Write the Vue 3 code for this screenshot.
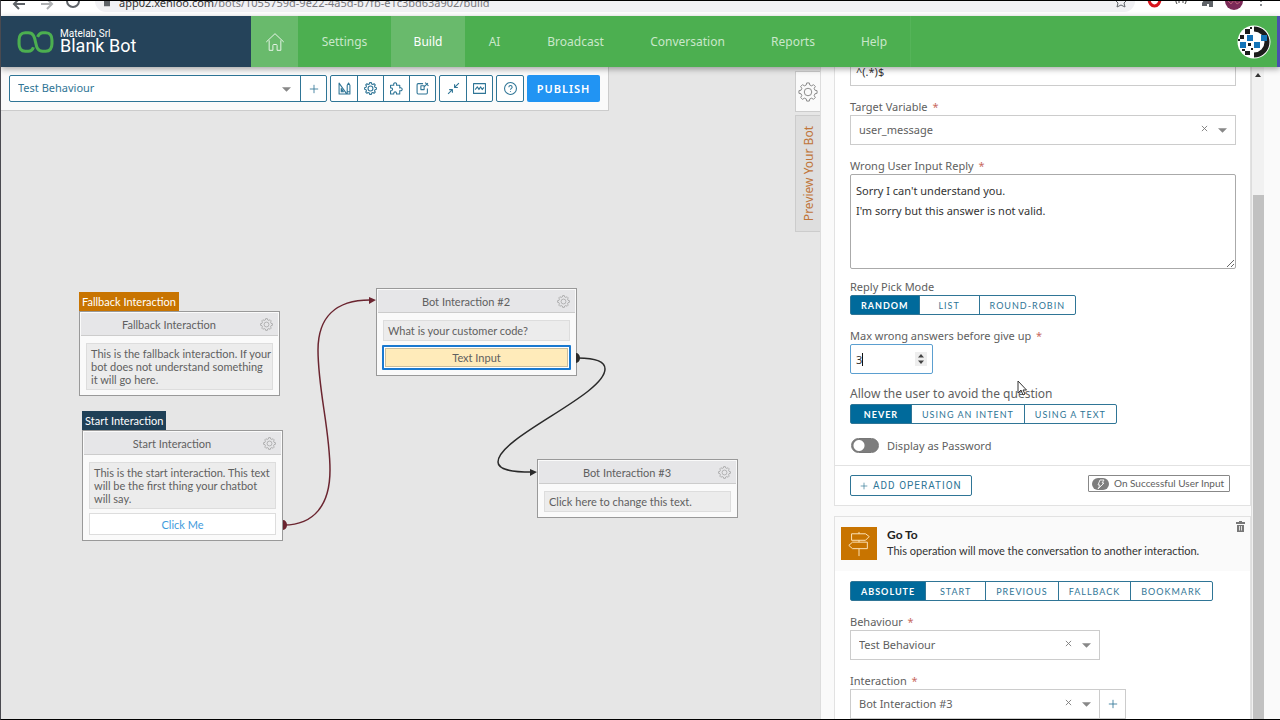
<script setup>
import { ref } from 'vue'

function gearPath(teeth, inner, outer, c) {
  const step = (Math.PI * 2) / teeth
  const at = (r, a) => `${(c + r * Math.sin(a)).toFixed(2)} ${(c - r * Math.cos(a)).toFixed(2)}`
  let d = ''
  for (let i = 0; i < teeth; i++) {
    const a = i * step
    d += `${i ? 'L' : 'M'}${at(inner, a - step * 0.32)}L${at(outer, a - step * 0.18)}L${at(outer, a + step * 0.18)}L${at(inner, a + step * 0.32)}`
  }
  return d + 'Z'
}

const icons = {
  gear: gearPath(8, 8.6, 11, 12) + 'M16.5 12A4.5 4.5 0 1 1 7.5 12A4.5 4.5 0 1 1 16.5 12Z',
  plus: 'M12 2V22M2 12H22',
  design: 'M2 2V22H16ZM6 12V18H10ZM17 6L19.500 2L22 6V22H17ZM17 18H22',
  puzzle: 'M1 6H7C5 0 14 0 12 6H18V11C24 9 24 18 18 16V22H12C13 17 6 17 7 22H1V16C6 17 6 10 1 11Z',
  open: 'M13 3H4Q2 3 2 5V20Q2 22 4 22H19Q21 22 21 20V12M17 1L23 7M22 2L14 10M9 7H15V14H9Z',
  collapse: 'M22 2L14 10M14 4V10H20M2 22L10 14M4 14H10V20',
  chart: 'M1 3H23V21H1ZM4 14L8 9L11 14L14 9L17 14L20 10',
  help: 'M23 12A11 11 0 1 1 1 12A11 11 0 1 1 23 12ZM9 9.5C9 5.5 15 5.5 15 9.5C15 12 12 11.5 12 14.5M12 17V18.5',
  home: 'M1.5 12L12 2L22.500 12M5 10V22H9.500V16Q9.500 15 10.500 15H13.500Q14.500 15 14.500 16V22H19V10'
}

const nav = [
  { label: 'Settings' },
  { label: 'Build', active: true },
  { label: 'AI' },
  { label: 'Broadcast' },
  { label: 'Conversation' },
  { label: 'Reports' },
  { label: 'Help' }
]

const toolGroups = [
  [
    { icon: 'design', label: 'Design' },
    { icon: 'gear', label: 'Behaviour settings' },
    { icon: 'puzzle', label: 'Plugins' },
    { icon: 'open', label: 'Export' }
  ],
  [
    { icon: 'collapse', label: 'Collapse' },
    { icon: 'chart', label: 'Overview' }
  ],
  [{ icon: 'help', label: 'Help' }]
]

const nodes = [
  { x: 78, y: 225, tag: 'Fallback Interaction', tone: 'orange', title: 'Fallback Interaction', text: 'This is the fallback interaction. If your\nbot does not understand something\nit will go here.' },
  { x: 81, y: 344, tag: 'Start Interaction', tone: 'navy', title: 'Start Interaction', text: 'This is the start interaction. This text\nwill be the first thing your chatbot\nwill say.', action: 'Click Me' },
  { x: 375, y: 221, title: 'Bot Interaction #2', text: 'What is your customer code?', input: 'Text Input' },
  { x: 536, y: 392, title: 'Bot Interaction #3', text: 'Click here to change this text.' }
]

const replies = ref("Sorry I can't understand you.\nI'm sorry but this answer is not valid.")
const pickMode = ref('Random')
const avoidMode = ref('Never')
const target = ref('Absolute')
</script>

<template>
  <div class="page">
    <div class="chrome">
      <svg class="chrome-nav" viewBox="0 0 90 12"><path d="M13 3H24M18 8L13 3L18 -2" /><path d="M40 3H51M46 8L51 3L46 -2" opacity="0.5" /><path d="M78 0A6 6 0 0 1 66 0" /></svg>
      <div class="url">
        <svg class="lock" viewBox="0 0 8 8"><rect width="8" height="7" /></svg>
        <span class="host">app02.xenioo.com</span><span>/bots/1055759d-9e22-4a5d-b7fb-e1c3bd63a902/build</span>
        <svg class="star" viewBox="0 0 12 12"><path d="M1 0L3 2L2 6L6 4L10 6L9 2L11 0" /></svg>
      </div>
      <svg class="chrome-ext" viewBox="0 0 145 12">
        <path d="M14 -2A5.500 7 0 0 0 25 -2" fill="none" stroke="#d8141c" stroke-width="3" />
        <path d="M41 -1V1L42 3M51 -1V1L50 3M44 -1V2M48 -1V2" fill="none" stroke="#444" />
        <path d="M69 -1H78V6H74V3H72V5H67V2Z" fill="#5f6368" />
        <circle cx="99" cy="0" r="9" fill="#7b2a58" /><path d="M93 0L96 3L99 -1L102 3L105 1" fill="none" stroke="#b86078" stroke-width="1" />
        <circle cx="126" cy="0" r="1" fill="#5f6368" /><circle cx="126" cy="4" r="1" fill="#5f6368" />
      </svg>
    </div>

    <header class="topbar">
      <div class="brand">
        <svg class="logo" viewBox="0 0 36 22"><path d="M16 16C15 19 13 20 11 20H8C4 20 2 17 2 13V9C2 5 4 2 8 2H11C16 2 17 6 18 11C19 16 20 20 25 20H28C32 20 34 17 34 13V9C34 5 32 2 28 2H25C22 2 21 4 20 6" /></svg>
        <div>
          <div class="company">Matelab Srl</div>
          <div class="bot">Blank Bot</div>
        </div>
      </div>
      <nav class="menu">
        <a class="home" href="#" aria-label="Home"><svg class="ico home-ico" viewBox="0 0 24 24"><path :d="icons.home" /></svg></a>
        <a v-for="n in nav" :key="n.label" href="#" :class="{ active: n.active }">{{ n.label }}</a>
      </nav>
      <svg class="avatar" viewBox="0 0 34 34">
        <circle cx="17" cy="17" r="16.500" fill="#fff" />
        <path d="M17 4A13 13 0 0 1 17 30" fill="none" stroke="#1c1c1c" stroke-width="5" />
        <path d="M8 4h5v5H8zM3 10h4v4H3zM8 26h5v4H8zM11 18h3v3h-3zM13 2h2v2h-2zM5 24h3v2H5zM1 14h2v2H1zM14 23h2v2h-2z" fill="#1c1c1c" />
        <path d="M23 10h7v6h-7zM17 17h6v6h-6z" fill="#fff" />
        <path d="M10 10h6v6h-6zM3 17h6v6H3zM17 17h6v6h-6zM24 10h6v6h-6z" fill="#1474b8" />
      </svg>
      <div class="edge"></div>
    </header>

    <div class="workspace">
      <main class="canvas">
        <svg class="wires" width="800" height="653" viewBox="0 0 800 653">
          <g transform="translate(-1 -67)">
            <path d="M284 525C314 525 330 505 330 470C330 430 318 390 318 350C318 318 335 300 370 300" stroke="#6b2530" />
            <path d="M283 520A4 5 0 0 1 283 530ZM369 297L376 300L369 304Z" fill="#6b2530" />
            <path d="M578 358C595 358 605 361 605 369C605 395 498 437 498 462C498 470 512 472 532 472" stroke="#2a2a2a" />
            <path d="M576 353A4 5 0 0 1 576 363ZM530 469L537 472L530 476Z" fill="#2a2a2a" />
          </g>
        </svg>

        <section v-for="n in nodes" :key="n.title" class="node" :style="{ left: n.x + 'px', top: n.y + 'px' }">
          <div v-if="n.tag" class="tag" :class="n.tone">{{ n.tag }}</div>
          <div class="box">
            <div class="box-head">
              <span>{{ n.title }}</span>
              <button class="plain" :aria-label="n.title + ' settings'"><svg class="ico gear-s" viewBox="0 0 24 24"><path :d="icons.gear" /></svg></button>
            </div>
            <div class="box-body">
              <p class="msg">{{ n.text }}</p>
              <button v-if="n.action" class="action">{{ n.action }}</button>
              <div v-if="n.input" class="selected"><button class="text-input">{{ n.input }}</button></div>
            </div>
          </div>
        </section>

        <div class="toolbar">
          <div class="behaviour">
            <div class="pick">
              <select aria-label="Current behaviour"><option>Test Behaviour</option></select>
              <svg class="caret" viewBox="0 0 10 5"><path d="M0 0H10L5 5Z" /></svg>
            </div>
            <button aria-label="Add behaviour"><svg class="ico plus-s" viewBox="0 0 24 24"><path :d="icons.plus" /></svg></button>
          </div>
          <div v-for="(g, i) in toolGroups" :key="i" class="tools">
            <button v-for="t in g" :key="t.label" :aria-label="t.label"><svg class="ico" viewBox="0 0 24 24"><path :d="icons[t.icon]" /></svg></button>
          </div>
          <button class="publish">PUBLISH</button>
        </div>

        <div class="tabs">
          <button class="tab on" aria-label="Settings"><svg class="ico gear-l" viewBox="0 0 24 24"><path :d="icons.gear" /></svg></button>
          <button class="tab preview"><span>Preview Your Bot</span></button>
        </div>
      </main>

      <aside class="panel">
        <div class="scroll">
          <div class="card first">
            <div class="fields">
              <input class="control" aria-label="Pattern" value="^(.*)$" />
              <label class="label" for="variable">Target Variable <i>*</i></label>
              <div class="pick">
                <select id="variable" class="control"><option>user_message</option></select>
                <button class="clear" aria-label="Clear variable"><svg viewBox="0 0 8 8"><path d="M1 1L7 7M7 1L1 7" /></svg></button>
                <svg class="caret" viewBox="0 0 10 5"><path d="M0 0H10L5 5Z" /></svg>
              </div>
              <label class="label" for="reply">Wrong User Input Reply <i>*</i></label>
              <textarea id="reply" v-model="replies"></textarea>
              <div class="label near">Reply Pick Mode</div>
              <div class="group">
                <button v-for="m in ['Random', 'List', 'Round-Robin']" :key="m" :class="{ on: m === pickMode }" @click="pickMode = m">{{ m }}</button>
              </div>
              <label class="label" for="max">Max wrong answers before give up <i>*</i></label>
              <div class="number">
                <input id="max" class="control" type="number" value="3" />
                <span class="cursor"></span>
                <svg class="spin" viewBox="0 0 12 14"><rect width="12" height="14" fill="#eee" /><path d="M3 5.500H9L6 2ZM3 8.500H9L6 12Z" fill="#444" /></svg>
              </div>
              <div class="label large">Allow the user to avoid the question</div>
              <div class="group">
                <button v-for="m in ['Never', 'Using an intent', 'Using a text']" :key="m" :class="{ on: m === avoidMode }" @click="avoidMode = m">{{ m }}</button>
              </div>
              <label class="toggle"><input type="checkbox" />Display as Password</label>
            </div>
            <div class="foot">
              <button class="add"><svg class="ico" viewBox="0 0 24 24"><path :d="icons.plus" /></svg>ADD OPERATION</button>
              <div class="badge">
                <svg viewBox="0 0 17 12"><rect width="17" height="12" rx="6" fill="#7d7d7d" /><path d="M8 2H12L10 5H12L6 11L8 7H6Z" fill="none" stroke="#eee" stroke-width="1" /></svg>
                <span>On Successful User Input</span>
              </div>
            </div>
          </div>

          <div class="card second">
            <div class="op-head">
              <div class="op-icon"><svg viewBox="0 0 24 28"><path d="M12 1V3M4 3H19L23 6L19 10H4ZM12 10V12M5 12H21V19H5L1 15.500ZM12 19V27" /></svg></div>
              <div class="op-text">
                <h3>Go To</h3>
                <p>This operation will move the conversation to another interaction.</p>
              </div>
              <button class="plain trash" aria-label="Delete operation"><svg viewBox="0 0 9 11"><path d="M3 0H6V1H9V3H0V1H3ZM1 4H8V11H1Z" fill="#777" /><path d="M3.500 5V9.500M5.500 5V9.500" stroke="#ddd" /></svg></button>
            </div>
            <div class="fields">
              <div class="group">
                <button v-for="m in ['Absolute', 'Start', 'Previous', 'Fallback', 'Bookmark']" :key="m" :class="{ on: m === target }" @click="target = m">{{ m }}</button>
              </div>
              <label class="label" for="behaviour">Behaviour <i>*</i></label>
              <div class="pick narrow">
                <select id="behaviour" class="control"><option>Test Behaviour</option></select>
                <button class="clear" aria-label="Clear behaviour"><svg viewBox="0 0 8 8"><path d="M1 1L7 7M7 1L1 7" /></svg></button>
                <svg class="caret" viewBox="0 0 10 5"><path d="M0 0H10L5 5Z" /></svg>
              </div>
              <label class="label" for="interaction">Interaction <i>*</i></label>
              <div class="joined">
                <div class="pick narrow">
                  <select id="interaction" class="control"><option>Bot Interaction #3</option></select>
                  <button class="clear" aria-label="Clear interaction"><svg viewBox="0 0 8 8"><path d="M1 1L7 7M7 1L1 7" /></svg></button>
                  <svg class="caret" viewBox="0 0 10 5"><path d="M0 0H10L5 5Z" /></svg>
                </div>
                <button class="more" aria-label="Add interaction"><svg class="ico plus-s" viewBox="0 0 24 24"><path :d="icons.plus" /></svg></button>
              </div>
            </div>
          </div>
        </div>
        <div class="bar">
          <svg viewBox="0 0 6 4"><path d="M0 4L3 0L6 4Z" fill="#333" /></svg>
          <div class="thumb"></div>
        </div>
        <div class="gutter"></div>
      </aside>
    </div>
    <svg class="pointer" viewBox="0 0 10 16"><path d="M1 1V13L4 10L6 15L8 14L6 10H9.500Z" fill="#fff" stroke="#333" /></svg>
  </div>
</template>

<style>
html,
body {
  margin: 0;
  overflow: hidden;
}
</style>

<style scoped>
* {
  box-sizing: border-box;
}
.page {
  position: relative;
  display: flex;
  flex-direction: column;
  height: 100vh;
  overflow: hidden;
  border-top: 1px solid #000;
  border-bottom: 1px solid #000;
  border-left: 1px solid #4a4a50;
  background: #e6e6e6;
  color: #606060;
  font-family: 'Noto Sans', 'Open Sans', sans-serif;
  font-size: 11px;
}
button,
input,
select,
textarea {
  font: inherit;
  color: inherit;
  margin: 0;
  padding: 0;
  border: 0;
  background: none;
  border-radius: 0;
  outline: none;
  appearance: none;
}
button {
  display: flex;
  align-items: center;
  justify-content: center;
  white-space: nowrap;
}
svg {
  display: block;
  flex: none;
}
.ico {
  width: 13px;
  height: 13px;
  fill: none;
  stroke: currentColor;
  stroke-width: 2;
  stroke-linejoin: round;
}
.plus-s {
  width: 10px;
  height: 10px;
}

/* browser strip */
.chrome {
  display: flex;
  flex: none;
  height: 15px;
  overflow: hidden;
  background: #fff;
}
.chrome-nav {
  width: 90px;
  height: 12px;
  fill: none;
  stroke: #5f6368;
  stroke-width: 2;
}
.url {
  display: flex;
  flex: 1;
  height: 11px;
  margin-left: 4px;
  padding: 0 8px 0 9px;
  overflow: hidden;
  border-radius: 0 0 12px 12px;
  background: #f1f1f4;
  color: #77777c;
  font-size: 11px;
  line-height: 4px;
}
.lock {
  width: 6px;
  height: 6px;
  margin-right: 9px;
  fill: #5f6368;
}
.host {
  color: #333;
}
.star {
  width: 12px;
  height: 12px;
  margin-left: auto;
  fill: none;
  stroke: #5f6368;
}
.chrome-ext {
  width: 145px;
  height: 12px;
}

/* top bar */
.topbar {
  position: relative;
  z-index: 3;
  display: flex;
  align-items: center;
  flex: none;
  height: 51px;
  background: #4caf50;
  box-shadow: 0 2px 6px rgba(0, 0, 0, 0.35);
}
.brand {
  display: flex;
  align-items: center;
  gap: 6px;
  width: 250px;
  height: 51px;
  padding-left: 16px;
  background: #25435a;
  color: #fff;
}
.logo {
  width: 37px;
  height: 24px;
  fill: none;
  stroke: #4caf50;
  stroke-width: 3;
}
.company {
  font-family: Roboto, sans-serif;
  font-size: 10px;
  line-height: 8px;
}
.bot {
  font-family: Roboto, sans-serif;
  font-size: 18px;
  line-height: 16px;
}
.menu {
  display: grid;
  grid-template-columns: 47px 93px 74px 59px 103px 121px 90px 73px;
  height: 51px;
}
.menu a {
  display: flex;
  align-items: center;
  justify-content: center;
  color: #c9e7ca;
  font-size: 12px;
  text-decoration: none;
}
.menu a.home,
.menu a.active {
  background: #69ba6c;
  color: #fff;
}
.menu a:last-child {
  border-right: 1px solid #55b459;
}
.home-ico {
  width: 20px;
  height: 20px;
  stroke-width: 1;
}
.avatar {
  width: 34px;
  height: 34px;
  margin-left: auto;
}
.edge {
  align-self: stretch;
  width: 3px;
  margin-left: 6px;
  background: #4a4fae;
}

/* canvas */
.workspace {
  display: flex;
  flex: 1;
  min-height: 0;
}
.canvas {
  position: relative;
  flex: 1;
  min-width: 0;
  overflow: hidden;
}
.wires {
  position: absolute;
  left: 0;
  top: 0;
  z-index: 1;
  fill: none;
  stroke-width: 1.500;
}
.toolbar {
  position: absolute;
  left: 0;
  top: 0;
  display: flex;
  gap: 3px;
  padding: 8px;
  border: 1px solid #ccc;
  border-width: 0 1px 1px 0;
  background: #fafafa;
  color: #2f7596;
}
.behaviour,
.tools {
  display: flex;
  height: 27px;
  border: 1px solid #2f7596;
  border-radius: 2px;
  background: #fff;
}
.behaviour {
  width: 318px;
}
.behaviour .pick {
  flex: 1;
}
.behaviour select {
  width: 100%;
  height: 25px;
  padding: 0 0 2px 8px;
}
.behaviour > button,
.tools button {
  width: 26px;
}
.behaviour > button,
.tools button + button {
  border-left: 1px solid #2f7596;
}
.publish {
  width: 73px;
  height: 27px;
  border-radius: 2px;
  background: #2194f3;
  color: #fff;
  font-size: 11px;
  font-weight: 600;
  letter-spacing: 1px;
}
.tabs {
  position: absolute;
  right: 0;
  top: 4px;
  display: flex;
  flex-direction: column;
  gap: 3px;
}
.tab {
  width: 25px;
  height: 117px;
  border: 1px solid #ccc;
  border-right: 0;
  background: #dedede;
  color: #c0753a;
}
.tab.on {
  height: 41px;
  background: #fafafa;
  color: #777;
}
.gear-l {
  width: 20px;
  height: 20px;
  stroke-width: 1;
}
.preview span {
  writing-mode: vertical-rl;
  transform: rotate(180deg);
  font-size: 12px;
}

/* nodes */
.node {
  position: absolute;
  width: 201px;
  display: flex;
  flex-direction: column;
  align-items: flex-start;
  font-family: Lato, sans-serif;
}
.tag {
  height: 19px;
  padding: 0 3px;
  color: #fff;
  line-height: 19px;
}
.orange {
  background: #c87400;
}
.navy {
  background: #1f4057;
}
.box {
  width: 100%;
  border: 1px solid #999;
  background: #fafafa;
  padding: 1px;
}
.box-head {
  display: flex;
  align-items: center;
  height: 23px;
  padding: 0 5px;
  border-bottom: 1px solid #ccc;
  background: #e6e6e8;
}
.box-head span {
  flex: 1;
  padding-right: 8px;
  text-align: center;
}
.plain {
  color: #888;
}
.gear-s {
  width: 13px;
  height: 13px;
  stroke-width: 1;
}
.box-body {
  display: flex;
  flex-direction: column;
  gap: 4px;
  padding: 7px 5px 4px;
}
.msg {
  margin: 0;
  padding: 3px 0 3px 4px;
  border: 1px solid #ddd;
  background: #ececec;
  line-height: 13px;
  white-space: pre;
}
.action {
  height: 22px;
  border: 1px solid #ddd;
  background: #fff;
  color: #3f9bdc;
}
.selected {
  margin: 0 -1px;
  border: 2px solid #1979d0;
  border-radius: 1px;
  padding: 1px;
  background: #fff;
}
.text-input {
  width: 100%;
  height: 19px;
  border: 1px solid #c8bd9d;
  background: #ffebba;
}

/* panel */
.panel {
  display: flex;
  flex: none;
  width: 460px;
  border-left: 1px solid #ddd;
  background: #fafafa;
}
.scroll {
  flex: 1;
  min-width: 0;
  overflow: hidden;
  padding-left: 13px;
  border-right: 1px solid #ddd;
}
.card {
  border: 1px solid #e2e2e2;
  background: #fff;
}
.first {
  margin-top: -12px;
  margin-bottom: 10px;
}
.fields {
  padding: 0 14px 12px 15px;
}
.second .fields {
  padding-top: 10px;
}
.control {
  display: block;
  width: 100%;
  height: 30px;
  padding: 0 8px 2px;
  border: 1px solid #ccc;
  background: #fff;
}
input.control {
  padding: 0 5px;
  color: #333;
}
.label {
  display: block;
  margin-top: 12px;
  line-height: 17px;
}
.label i {
  color: #c96a5f;
  font-style: normal;
  margin-left: 2px;
}
.near {
  margin-top: 9px;
}
.large {
  margin-top: 10px;
  font-size: 12px;
  line-height: 20px;
}
textarea {
  display: block;
  width: 100%;
  height: 95px;
  padding: 6px 5px;
  border: 1px solid #aaa;
  border-radius: 2px;
  color: #333;
  line-height: 20px;
  resize: vertical;
}
.pick {
  position: relative;
}
.caret {
  position: absolute;
  right: 9px;
  top: 50%;
  width: 9px;
  height: 5px;
  margin-top: -2px;
  fill: #888;
}
.clear {
  position: absolute;
  right: 28px;
  top: 10px;
}
.clear svg {
  width: 7px;
  height: 7px;
  fill: none;
  stroke: #777;
}
.narrow {
  width: 250px;
}
.group {
  display: flex;
  width: max-content;
  border: 1px solid #2f7596;
  border-radius: 2px;
}
.group button {
  min-width: 60px;
  height: 18px;
  padding: 0 10px;
  color: #2f7596;
  font-family: Lato, sans-serif;
  font-size: 9px;
  text-transform: uppercase;
  letter-spacing: 1px;
}
.group button + button {
  border-left: 1px solid #2f7596;
}
.group .on {
  background: #006a9b;
  color: #fff;
  font-weight: 700;
}
.number {
  position: relative;
  width: 83px;
}
.number .control {
  border-color: #5b9fd0;
  border-radius: 2px;
  appearance: textfield;
}
.cursor {
  position: absolute;
  left: 12px;
  top: 9px;
  width: 1px;
  height: 13px;
  background: #111;
}
.spin {
  position: absolute;
  right: 6px;
  top: 8px;
  width: 12px;
  height: 14px;
}
.toggle {
  display: flex;
  align-items: center;
  gap: 8px;
  height: 16px;
  margin: 13px 0 0 1px;
}
.toggle input {
  width: 28px;
  height: 15px;
  border: 1px solid #777;
  border-radius: 8px;
  background: radial-gradient(circle at 7px 50%, #fff 5px, #7d7d7d 6px);
}
.foot {
  display: flex;
  align-items: flex-start;
  justify-content: space-between;
  padding: 9px 20px 9px 15px;
  border-top: 1px solid #e2e2e2;
}
.add {
  gap: 5px;
  height: 21px;
  padding: 0 9px;
  border: 1px solid #2f7596;
  border-radius: 2px;
  color: #2f7596;
  font-family: Roboto, sans-serif;
  font-size: 10px;
  letter-spacing: 1px;
}
.add .ico {
  width: 8px;
  height: 8px;
}
.badge {
  display: flex;
  align-items: center;
  gap: 5px;
  width: 142px;
  height: 17px;
  padding-left: 3px;
  border: 1px solid #888;
  border-radius: 1px;
  font-family: Lato, sans-serif;
  font-size: 10px;
  line-height: 15px;
  white-space: nowrap;
}
.badge svg {
  width: 17px;
  height: 12px;
}
.op-head {
  display: flex;
  height: 54px;
  padding: 10px 5px 0 6px;
  background: #fafafa;
}
.op-icon {
  display: flex;
  align-items: center;
  justify-content: center;
  width: 36px;
  height: 33px;
  background: #c87400;
}
.op-icon svg {
  width: 24px;
  height: 26px;
  fill: none;
  stroke: #ffe9c4;
}
.op-text {
  flex: 1;
  margin-left: 10px;
  color: #333;
  font-family: Lato, sans-serif;
}
.op-text h3,
.op-text p {
  margin: 0;
  font-size: 11px;
  line-height: 16px;
}
.op-text h3 {
  color: #222;
  font-size: 12px;
  font-weight: 700;
}
.trash {
  align-self: flex-start;
  margin-top: -6px;
}
.trash svg {
  width: 9px;
  height: 11px;
}
.joined {
  display: flex;
}
.more {
  width: 26px;
  height: 30px;
  border: 1px solid #ccc;
  border-left: 0;
  color: #2f7596;
}
.bar {
  display: flex;
  flex-direction: column;
  align-items: center;
  width: 12px;
  background: #f1f1f1;
}
.bar svg {
  width: 6px;
  height: 4px;
  margin-top: 6px;
}
.thumb {
  flex: 1;
  width: 11px;
  margin-top: 118px;
  background: #c1c1c1;
}
.gutter {
  width: 16px;
}
.pointer {
  position: absolute;
  left: 1016px;
  top: 379px;
  width: 10px;
  height: 16px;
}
</style>
